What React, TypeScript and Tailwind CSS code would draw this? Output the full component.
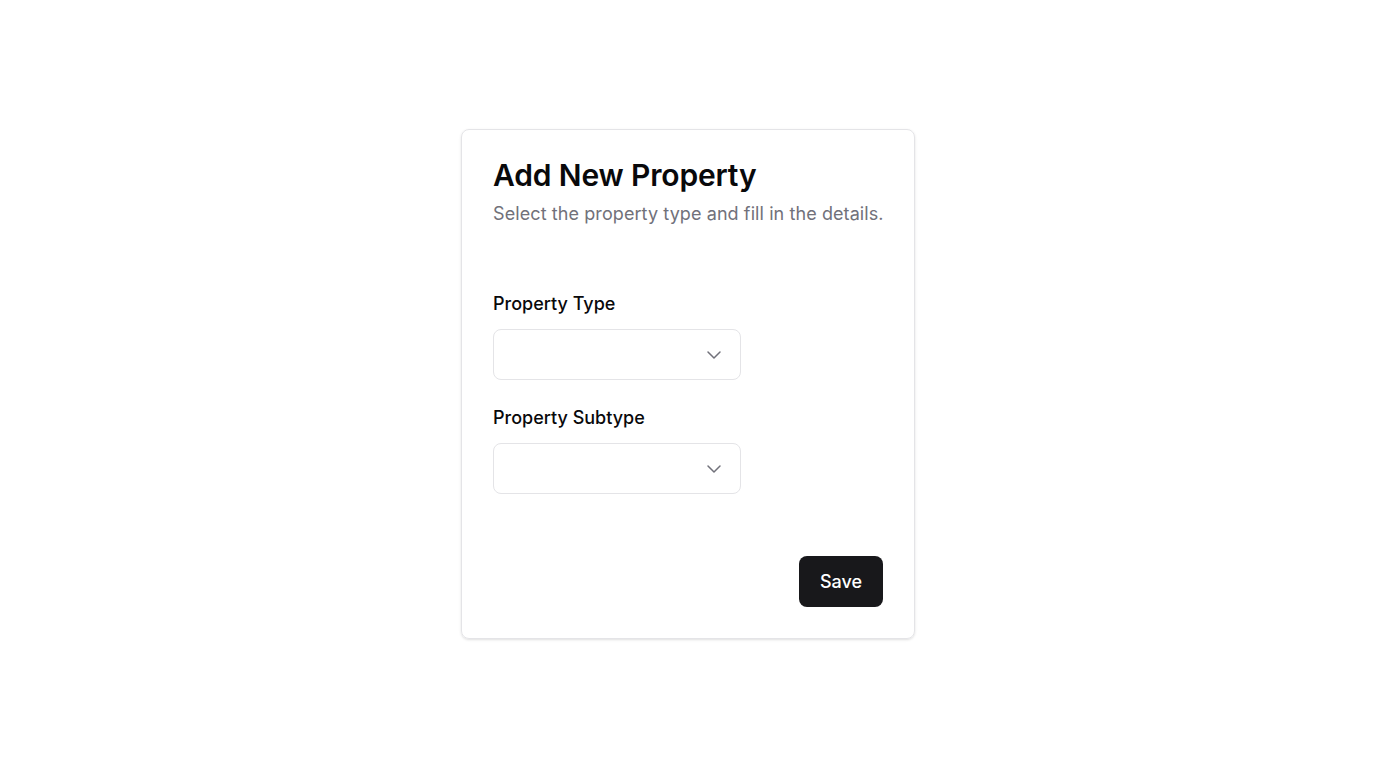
import React from 'react';
import { ChevronDown } from 'lucide-react';

const fields = ['Property Type', 'Property Subtype'];

const App = () => {
  return (
    <div className="min-h-screen w-full bg-white flex justify-center pt-[129px]" style={{ fontFamily: 'Inter, sans-serif' }}>
      <div className="w-[454px] h-[510px] rounded-lg border border-[#e4e4e7] shadow-sm px-[31px] pt-[30px] pb-[31px] flex flex-col">
        <h1 className="text-[30px] leading-[30px] font-semibold tracking-[-0.005em] text-[#09090b]">Add New Property</h1>
        <p className="mt-[12px] whitespace-nowrap text-[18px] leading-[24px] tracking-[0.005em] text-[#71717a]">Select the property type and fill in the details.</p>

        <div className="mt-[66px] flex flex-col gap-[26px]">
          {fields.map((label) => (
            <div key={label} className="flex flex-col">
              <label className="text-[18px] leading-[24px] font-medium text-[#09090b]">{label}</label>
              <button className="mt-[13px] w-[248px] h-[51px] rounded-lg border border-[#e4e4e7] bg-white flex items-center justify-end pr-[14px]">
                <ChevronDown className="w-[24px] h-[24px] text-[#71717a]" strokeWidth={1.5} />
              </button>
            </div>
          ))}
        </div>

        <div className="mt-auto flex justify-end">
          <button className="w-[84px] h-[51px] rounded-lg bg-[#18181b] text-white text-[18px] font-medium">Save</button>
        </div>
      </div>
    </div>
  );
};

export default App;
